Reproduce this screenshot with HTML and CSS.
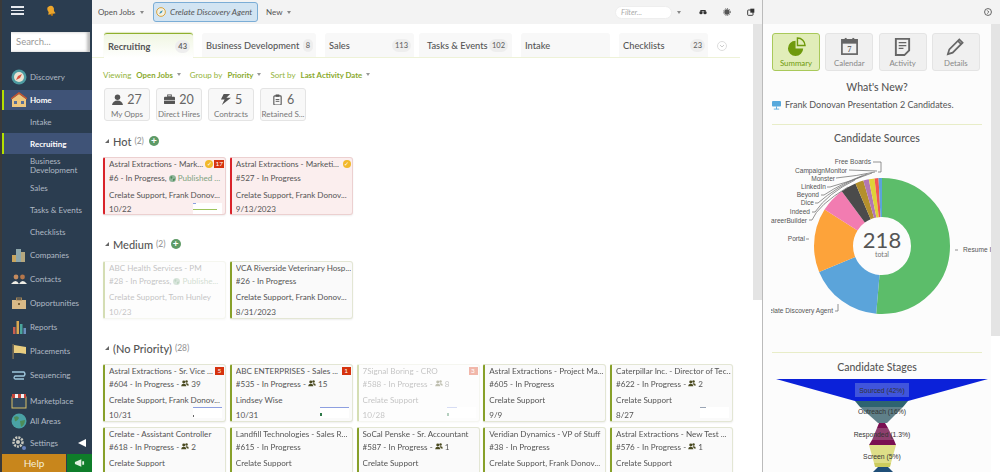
FILE: index.html
```html
<!DOCTYPE html>
<html lang="en">
<head>
<meta charset="utf-8">
<title>Recruiting</title>
<link rel="stylesheet" href="styles.css">
</head>
<body>
<svg class="defs" width="0" height="0">
  <symbol id="people" viewBox="0 0 10 9"><circle cx="3.400" cy="2.600" r="1.900" fill="#4a4a20"/><path d="M0 8 Q0.500 4.800 3.400 4.800 Q6.300 4.800 6.800 8Z" fill="#4a4a20"/><circle cx="7" cy="2" r="1.600" fill="#4a4a20"/><path d="M5.800 4.300 Q9.600 3.300 10 7 H7.600Z" fill="#4a4a20"/></symbol>
  <symbol id="globe" viewBox="0 0 8 8"><circle cx="4" cy="4" r="4" fill="#8fb59a"/><path d="M1.500 2 Q3.500 0.800 4 2.500 Q3 5 2 4Z M4.500 4.500 L7 4 Q7 6.500 5 7.500Z" fill="#4d8c58"/></symbol>
</svg>
<div class="app">
  <aside class="sidebar">
    <div class="side-top">
      <span class="burger"><i></i><i></i><i></i></span>
      <svg class="bell" viewBox="0 0 12 12"><path d="M2.500 3 Q5 0 8 1.200 Q10.500 3 9.800 6.500 L11.500 9 L3.500 10.500 L4 8 Q2 6 2.500 3Z" fill="#eda62b"/><circle cx="7.500" cy="10.500" r="1.300" fill="#b87412"/></svg>
    </div>
    <div class="search">Search...</div>
    <nav class="nav">
      <a class="nav-row"><svg class="ic" viewBox="0 0 16 16"><circle cx="8" cy="8" r="7.500" fill="#4d9aa0"/><circle cx="8" cy="8" r="5" fill="#e9e3d2"/><path d="M11 5 L9 9 L5 11 L7 7Z" fill="#d8503c"/></svg>Discovery</a>
      <a class="nav-row sel home"><svg class="ic" viewBox="0 0 16 16"><path d="M1 7 L8 2 L15 7 V15 H1Z" fill="#eec77f"/><path d="M0 7 L8 1 L16 7" fill="none" stroke="#c9572e" stroke-width="1.500"/><rect x="3" y="9" width="3" height="3" fill="#58709a"/><rect x="10" y="9" width="3" height="3" fill="#58709a"/></svg>Home</a>
      <a class="nav-row">Intake</a>
      <a class="nav-row sel rec">Recruiting</a>
      <a class="nav-row two">Business Development</a>
      <a class="nav-row">Sales</a>
      <a class="nav-row">Tasks &amp; Events</a>
      <a class="nav-row">Checklists</a>
      <a class="nav-row tall"><svg class="ic" viewBox="0 0 16 16"><rect x="1" y="8" width="4" height="7" fill="#c9a55e"/><rect x="5" y="2" width="5" height="13" fill="#8ea7ab"/><rect x="10" y="5" width="4" height="10" fill="#b5a77e"/></svg>Companies</a>
      <a class="nav-row tall"><svg class="ic" viewBox="0 0 16 16"><circle cx="5" cy="6" r="2.400" fill="#c48a5e"/><circle cx="11.500" cy="6" r="2.400" fill="#b5764b"/><path d="M0 13 Q5 7 8 13Z" fill="#f0eee6"/><path d="M8 13 Q11.500 7 16 13Z" fill="#f0eee6"/></svg>Contacts</a>
      <a class="nav-row tall"><svg class="ic" viewBox="0 0 16 16"><rect x="1" y="5" width="14" height="9" fill="#d8b987"/><rect x="5.500" y="3" width="5" height="2" fill="none" stroke="#a58557"/><rect x="7" y="8" width="2" height="2" fill="#7b6036"/></svg>Opportunities</a>
      <a class="nav-row tall"><svg class="ic" viewBox="0 0 16 16"><rect x="2" y="8" width="2.500" height="7" fill="#c95f50"/><rect x="5.500" y="2" width="2.500" height="13" fill="#d9a851"/><rect x="9" y="5" width="2.500" height="10" fill="#4aa59d"/><rect x="12.500" y="9" width="2.500" height="6" fill="#6b8fbe"/></svg>Reports</a>
      <a class="nav-row tall"><svg class="ic" viewBox="0 0 16 16"><rect x="1.500" y="1" width="1.200" height="15" fill="#8d7a55"/><path d="M3 2 L9 3 L15 4 V11 L9 10 L3 10Z" fill="#e8cd80"/></svg>Placements</a>
      <a class="nav-row seq"><svg class="ic" viewBox="0 0 16 16"><path d="M1 5 H13 Q15 7 13 9 H4 Q2 11 4 12 H13" fill="none" stroke="#9fc7dd" stroke-width="1.300"/></svg>Sequencing</a>
      <a class="nav-row market"><svg class="ic" viewBox="0 0 16 16"><rect x="1" y="4" width="14" height="11" fill="#33485e" stroke="#d9c067"/><path d="M1 1 H15 V5 H1Z" fill="#c8453a"/><path d="M4 1 H7 V5 H4Z M10 1 H13 V5 H10Z" fill="#f0f0f0"/></svg>Marketplace</a>
      <a class="nav-row"><svg class="ic" viewBox="0 0 16 16"><circle cx="8" cy="8" r="7.500" fill="#4aa2a5"/><path d="M3 4 Q7 2 8 5 Q6 9 4 8Z M9 8 L14 7 Q14 12 10 14Z" fill="#4d8c58"/></svg>All Areas</a>
      <a class="nav-row"><svg class="ic" viewBox="0 0 16 16"><circle cx="7" cy="7" r="4.500" fill="none" stroke="#c9c9c0" stroke-width="2.500" stroke-dasharray="2 1"/><circle cx="7" cy="7" r="2" fill="#c9c9c0"/><circle cx="13" cy="13" r="2" fill="#6a83bd"/></svg>Settings<span class="collapse"></span></a>
    </nav>
    <div class="side-foot">
      <span class="help">Help</span>
      <span class="promo"><svg viewBox="0 0 12 10"><path d="M1 4 L8 1 V9 L1 6Z M9 3 H11 V7 H9Z" fill="#dff0df"/></svg></span>
    </div>
  </aside>

  <main class="main">
    <header class="topbar">
      <span class="tool">Open Jobs<b class="caret"></b></span>
      <span class="agent"><svg class="agent-ic" viewBox="0 0 16 16"><circle cx="8" cy="8" r="7" fill="#f2f0e2" stroke="#d8a033" stroke-width="1.500"/><path d="M11 5 L9 9 L5 11 L7 7Z" fill="#3c93b5"/></svg>Crelate Discovery Agent</span>
      <span class="tool">New<b class="caret"></b></span>
      <span class="grow"></span>
      <span class="filter">Filter...</span>
      <b class="caret"></b>
      <svg class="top-ic glasses" viewBox="0 0 12 8"><circle cx="3" cy="5" r="2.500" fill="#333"/><circle cx="9" cy="5" r="2.500" fill="#333"/><rect x="2" y="1" width="8" height="2" fill="#333"/></svg>
      <svg class="top-ic gear" viewBox="0 0 12 12"><circle cx="6" cy="6" r="4" fill="#555"/><circle cx="6" cy="6" r="5.200" fill="none" stroke="#555" stroke-dasharray="1.500 1.500" stroke-width="1.400"/></svg>
      <svg class="top-ic pop" viewBox="0 0 12 12"><rect x="1" y="3" width="8" height="8" rx="1" fill="none" stroke="#333" stroke-width="1.400"/><rect x="5" y="1" width="6" height="6" fill="#333"/></svg>
    </header>
    <div class="scroller">
      <div class="content">
        <div class="tabs">
          <span class="tab active">Recruiting<em>43</em></span>
          <span class="tab wide">Business Development<em class="small">8</em></span>
          <span class="tab">Sales<em>113</em></span>
          <span class="tab tasks">Tasks &amp; Events<em>102</em></span>
          <span class="tab">Intake</span>
          <span class="tab">Checklists<em>23</em></span>
          <svg class="more" viewBox="0 0 10 10"><circle cx="5" cy="5" r="4.500" fill="none" stroke="#ddd"/><path d="M3 4 L5 6 L7 4" fill="none" stroke="#ccc"/></svg>
        </div>
        <div class="viewbar">
          <span>Viewing</span><b>Open Jobs</b><i class="caret"></i>
          <span class="gap">Group by</span><b>Priority</b><i class="caret"></i>
          <span class="gap">Sort by</span><b>Last Activity Date</b><i class="caret"></i>
        </div>
        <div class="stats">
          <div class="stat"><div class="num"><svg class="stat-ic" viewBox="0 0 12 12"><circle cx="6" cy="3.500" r="3" fill="#555"/><path d="M0 12 Q1 7 6 7 Q11 7 12 12Z" fill="#555"/></svg>27</div><div class="cap">My Opps</div></div>
          <div class="stat"><div class="num"><svg class="stat-ic" viewBox="0 0 12 12"><rect y="3" width="12" height="8" rx="1" fill="#555"/><rect x="4" y="1" width="4" height="2" fill="none" stroke="#555"/><rect y="6.500" width="12" height=".7" fill="#f8f8f8"/></svg>20</div><div class="cap">Direct Hires</div></div>
          <div class="stat"><div class="num"><svg class="stat-ic" viewBox="0 0 12 12"><path d="M4 0 H11 L7 4 H12 L2 12 L5 6 H1Z" fill="#555"/></svg>5</div><div class="cap">Contracts</div></div>
          <div class="stat"><div class="num"><svg class="stat-ic" viewBox="0 0 12 12"><rect x="2" y="2" width="8" height="10" rx="1" fill="none" stroke="#555" stroke-width="1.200"/><rect x="4" y="0.500" width="4" height="2.500" fill="#555"/><path d="M4 6 H8 M4 8 H8" stroke="#555"/></svg>6</div><div class="cap">Retained S...</div></div>
        </div>

        <h3 class="group top"><i class="tri"></i>Hot<small>(2)</small><span class="plus">+</span></h3>
        <div class="cards">
          <article class="card hot">
            <p class="title"><span class="clip">Astral Extractions - Mark...</span><span class="check">✓</span><span class="badge">17</span></p>
            <p>#6 - In Progress, <svg class="globe"><use href="#globe"/></svg><span class="pub"> Published ...</span></p>
            <p>Crelate Support, Frank Donov...</p>
            <p>10/22</p>
            <span class="mini"><i class="b1"></i><i class="b2"></i></span>
          </article>
          <article class="card hot">
            <p class="title"><span class="clip">Astral Extractions - Marketi...</span><span class="check">✓</span></p>
            <p>#527 - In Progress</p>
            <p>Crelate Support, Frank Donov...</p>
            <p>9/13/2023</p>
          </article>
        </div>

        <h3 class="group"><i class="tri"></i>Medium<small>(2)</small><span class="plus">+</span></h3>
        <div class="cards">
          <article class="card faded">
            <p class="title"><span class="clip">ABC Health Services - PM</span></p>
            <p>#28 - In Progress, <svg class="globe"><use href="#globe"/></svg><span class="pub"> Publishe...</span></p>
            <p>Crelate Support, Tom Hunley</p>
            <p>10/23</p>
          </article>
          <article class="card">
            <p class="title"><span class="clip">VCA Riverside Veterinary Hosp...</span></p>
            <p>#26 - In Progress</p>
            <p>Crelate Support, Frank Donov...</p>
            <p>8/31/2023</p>
          </article>
        </div>

        <h3 class="group last"><i class="tri"></i>(No Priority)<small>(28)</small></h3>
        <div class="cards">
          <article class="card">
            <p class="title"><span class="clip">Astral Extractions - Sr. Vice ...</span><span class="badge">5</span></p>
            <p>#604 - In Progress - <svg class="ppl"><use href="#people"/></svg> 39</p>
            <p>Crelate Support, Frank Donov...</p>
            <p>10/31</p>
            <span class="mini"><i class="b3"></i><i class="b5"></i></span>
          </article>
          <article class="card">
            <p class="title"><span class="clip">ABC ENTERPRISES - Sales ...</span><span class="badge">1</span></p>
            <p>#535 - In Progress - <svg class="ppl"><use href="#people"/></svg> 15</p>
            <p>Lindsey Wise</p>
            <p>10/31</p>
            <span class="mini"><i class="b3"></i><i class="b6"></i></span>
          </article>
          <article class="card faded">
            <p class="title"><span class="clip">7Signal Boring - CRO</span><span class="badge">3</span></p>
            <p>#588 - In Progress - <svg class="ppl"><use href="#people"/></svg> 8</p>
            <p>Crelate Support</p>
            <p>10/28</p>
            <span class="mini"><i class="b7"></i><i class="b6"></i></span>
          </article>
          <article class="card">
            <p class="title"><span class="clip">Astral Extractions - Project Ma...</span></p>
            <p>#605 - In Progress</p>
            <p>Crelate Support</p>
            <p>9/9</p>
          </article>
          <article class="card">
            <p class="title"><span class="clip">Caterpillar Inc. - Director of Tec...</span></p>
            <p>#622 - In Progress - <svg class="ppl"><use href="#people"/></svg> 2</p>
            <p>Crelate Support</p>
            <p>8/27</p>
            <span class="mini"><i class="b4"></i></span>
          </article>
          <article class="card">
            <p class="title"><span class="clip">Crelate - Assistant Controller</span></p>
            <p>#618 - In Progress - <svg class="ppl"><use href="#people"/></svg> 2</p>
            <p>Crelate Support</p>
          </article>
          <article class="card">
            <p class="title"><span class="clip">Landfill Technologies - Sales R...</span></p>
            <p>#615 - In Progress</p>
            <p>Crelate Support</p>
          </article>
          <article class="card">
            <p class="title"><span class="clip">SoCal Penske - Sr. Accountant</span></p>
            <p>#587 - In Progress - <svg class="ppl"><use href="#people"/></svg> 1</p>
            <p>Crelate Support</p>
          </article>
          <article class="card">
            <p class="title"><span class="clip">Veridian Dynamics - VP of Stuff</span></p>
            <p>#38 - In Progress</p>
            <p>Crelate Support, Frank Donov...</p>
          </article>
          <article class="card">
            <p class="title"><span class="clip">Astral Extractions - New Test ...</span></p>
            <p>#576 - In Progress - <svg class="ppl"><use href="#people"/></svg> 1</p>
            <p>Crelate Support</p>
          </article>
        </div>
      </div>
      <div class="scrolltrack"></div>
    </div>
  </main>

  <aside class="panel">
    <header class="panel-top"><svg class="round-btn" viewBox="0 0 10 10"><circle cx="5" cy="5" r="4.300" fill="none" stroke="#444"/><path d="M4 3 L6 5 L4 7" fill="none" stroke="#444"/></svg></header>
    <div class="panel-scroll">
      <div class="panel-body">
        <div class="views">
          <div class="view on"><svg class="view-ic" viewBox="0 0 20 20"><path d="M9 4 A8 8 0 1 0 17 12 H9Z" fill="#6f9a0c"/><path d="M11 1 A8 8 0 0 1 19 9 L11 9Z" fill="none" stroke="#6f9a0c" stroke-width="1.500"/></svg><span>Summary</span></div>
          <div class="view"><svg class="view-ic" viewBox="0 0 20 20"><rect x="2" y="3" width="16" height="15" fill="none" stroke="#666" stroke-width="1.800"/><rect x="2" y="3" width="16" height="4" fill="#666"/><rect x="5" y="1" width="2" height="4" fill="#666"/><rect x="13" y="1" width="2" height="4" fill="#666"/><text x="10" y="16" class="cal-num">7</text></svg><span>Calendar</span></div>
          <div class="view"><svg class="view-ic" viewBox="0 0 20 20"><path d="M3 2 H17 V14 L12 19 H3Z" fill="none" stroke="#666" stroke-width="2"/><path d="M6 6 H14 M6 9 H14 M6 12 H11" stroke="#666" stroke-width="1.400"/></svg><span>Activity</span></div>
          <div class="view"><svg class="view-ic" viewBox="0 0 20 20"><path d="M2 18 L3.500 13 L14 2.500 L17.500 6 L7 16.500Z" fill="none" stroke="#666" stroke-width="1.800"/><path d="M12.500 4 L16 7.500" stroke="#666" stroke-width="1.800"/></svg><span>Details</span></div>
        </div>
        <h4 class="panel-h news">What's New?</h4>
        <p class="news-item"><svg class="news-ic" viewBox="0 0 10 10"><rect width="10" height="6" rx="1" fill="#58a9dc"/><path d="M5 6 V9 M2 9 H8" stroke="#58a9dc"/></svg>Frank Donovan Presentation 2 Candidates.</p>
        <hr class="rule">
        <h4 class="panel-h">Candidate Sources</h4>
        <svg class="pie" viewBox="1 0 228 207">
          <clipPath id="pie-clip"><rect x="9" y="0" width="220" height="207"/></clipPath>
          <g fill="none" stroke-width="39" transform="rotate(-90 120 101)">
            <circle cx="120" cy="101" r="48.500" pathLength="360" stroke="#5cbd6a" stroke-dasharray="185 360"/>
            <circle cx="120" cy="101" r="48.500" pathLength="360" stroke="#5ba4da" stroke-dasharray="62.600 360" stroke-dashoffset="-185"/>
            <circle cx="120" cy="101" r="48.500" pathLength="360" stroke="#fda33a" stroke-dasharray="54.800 360" stroke-dashoffset="-247.600"/>
            <circle cx="120" cy="101" r="48.500" pathLength="360" stroke="#f27cb1" stroke-dasharray="21.300 360" stroke-dashoffset="-302.400"/>
            <circle cx="120" cy="101" r="48.500" pathLength="360" stroke="#4b4b4b" stroke-dasharray="13.300 360" stroke-dashoffset="-323.700"/>
            <circle cx="120" cy="101" r="48.500" pathLength="360" stroke="#b4902c" stroke-dasharray="7 360" stroke-dashoffset="-337"/>
            <circle cx="120" cy="101" r="48.500" pathLength="360" stroke="#b277b4" stroke-dasharray="4.800 360" stroke-dashoffset="-344"/>
            <circle cx="120" cy="101" r="48.500" pathLength="360" stroke="#ded237" stroke-dasharray="4.800 360" stroke-dashoffset="-348.800"/>
            <circle cx="120" cy="101" r="48.500" pathLength="360" stroke="#f15853" stroke-dasharray="3.400 360" stroke-dashoffset="-353.600"/>
            <circle cx="120" cy="101" r="48.500" pathLength="360" stroke="#5ba4da" stroke-dasharray="3 360" stroke-dashoffset="-357"/>
          </g>
          <g fill="none" stroke="#777" stroke-width="0.800">
            <path d="M111 17 H119 V27 H116"/>
            <path d="M87 25 L115 26"/>
            <path d="M74 33 Q95 31 113 27"/>
            <path d="M65 42 H68 Q90 36 110 28"/>
            <path d="M59 50 H62 Q80 38 105 29"/>
            <path d="M53 58 H56 Q74 42 100 31"/>
            <path d="M50 67 H53 Q66 48 93 35"/>
            <path d="M47 75 H50 Q56 60 86 42"/>
            <path d="M44 94 H47"/>
            <path d="M193 105 H196"/>
            <path d="M73 166 H76 V159"/>
          </g>
          <g class="pie-label" text-anchor="end" clip-path="url(#pie-clip)">
            <text x="109" y="19">Free Boards</text>
            <text x="85" y="27.500">CampaignMonitor</text>
            <text x="73" y="36">Monster</text>
            <text x="64" y="44">LinkedIn</text>
            <text x="57" y="52">Beyond</text>
            <text x="52" y="60">Dice</text>
            <text x="48" y="69">Indeed</text>
            <text x="45" y="77.500">CareerBuilder</text>
            <text x="43" y="96">Portal</text>
            <text x="71" y="168">Crelate Discovery Agent</text>
          </g>
          <text class="pie-label" x="201" y="107">Resume Import</text>
          <text class="pie-num" x="120" y="103" text-anchor="middle">218</text>
          <text class="pie-total" x="120" y="111.500" text-anchor="middle">total</text>
        </svg>
        <hr class="rule second">
        <h4 class="panel-h">Candidate Stages</h4>
        <svg class="funnel" viewBox="1 0 228 94">
          <path d="M14 1 H226 L146 23 H93Z" fill="#0b21d9"/>
          <rect x="93" y="5" width="54" height="14" fill="#4055dc"/>
          <path d="M93 23 H146 L141 29 H98Z" fill="#2e6470"/>
          <path d="M98 29 H141 L125 45 H116Z" fill="#5f8089"/>
          <path d="M117 45 H123 L126 50 H115Z" fill="#7a0f52"/>
          <path d="M115 50 H126 L132 62 H110Z" fill="#8e3f6e"/>
          <path d="M110 62 H132 L134 67 H107Z" fill="#7a0f52"/>
          <path d="M107 67 H134 L129 85 H112Z" fill="#dede88"/>
          <path d="M112 85 H129 L128 89 H113Z" fill="#cccc5e"/>
          <path d="M116 89 H126 L131 94 H111Z" fill="#1f4f78"/>
          <g class="fn-label" text-anchor="middle">
            <text x="120" y="14.500">Sourced  (42%)</text>
            <text x="120" y="36">Outreach  (16%)</text>
            <text x="120" y="58.500">Responded  (1.3%)</text>
            <text x="120" y="81">Screen  (5%)</text>
          </g>
        </svg>
      </div>
      <div class="panel-track"></div>
    </div>
  </aside>
</div>
</body>
</html>
```

FILE: styles.css
```css
* { box-sizing: border-box; }
html, body { margin: 0; height: 100%; overflow: hidden; }
body { font-family: "Lato", "Open Sans", sans-serif; font-size: 9px; color: #555; background: #fff; }
p, h3, h4 { margin: 0; font-weight: normal; }
.defs { position: absolute; }

.app { display: flex; width: 1000px; height: 472px; overflow: hidden; }

/* Sidebar */
.sidebar { width: 92px; flex: none; height: 472px; background: #2b3d50; border-left: 2px solid #3a3a3a; display: flex; flex-direction: column; color: #b0b9c4; }
.side-top { height: 32px; flex: none; display: flex; align-items: flex-start; padding: 5px 0 0 9px; gap: 21px; }
.burger { display: flex; flex-direction: column; gap: 2px; width: 13px; padding-top: 1px; }
.burger i { display: block; height: 1.500px; background: #e6e9ee; }
.bell { width: 11px; height: 11px; }
.search { flex: none; margin-left: 9px; width: 79px; height: 20px; background: #fff; color: #999; font-size: 9.500px; line-height: 20px; padding-left: 5px; box-shadow: inset -3px 0 3px #bbb; }
.nav { margin-top: 14px; flex: 1; min-height: 0; display: flex; flex-direction: column; }
.nav-row { height: 22px; flex: none; display: flex; align-items: center; padding-left: 28px; position: relative; font-size: 8px; }
.ic { position: absolute; left: 9px; top: 50%; width: 16px; height: 16px; margin-top: -8px; }
.nav-row.tall { height: 24px; }
.nav-row.seq { height: 23px; }
.nav-row.market { height: 24px; margin-top: 3px; margin-bottom: -3px; }
.nav-row.two { height: 23px; line-height: 8.500px; padding-right: 8px; }
.nav-row.sel { background: #3f5377; color: #fff; font-weight: 700; border-left: 2px solid #b4e000; padding-left: 26px; }
.nav-row.sel .ic { left: 7px; }
.nav-row.home { height: 20px; margin-top: 2px; margin-bottom: 1px; }
.nav-row.rec { height: 21px; }
.collapse { position: absolute; right: 6px; top: 7px; width: 0; height: 0; border-right: 8px solid #fff; border-top: 4px solid transparent; border-bottom: 4px solid transparent; }
.side-foot { height: 18px; flex: none; display: flex; gap: 1px; }
.help { width: 64px; background: #c8861c; color: #f5efd8; font-size: 10px; text-align: center; line-height: 19px; }
.promo { flex: 1; background: #0f7d2a; display: flex; align-items: center; justify-content: center; }
.promo svg { width: 11px; height: 10px; }

/* Main */
.main { width: 671px; flex: none; height: 472px; display: flex; flex-direction: column; background: #fff; border-right: 1px solid #bbb; }
.topbar { height: 24px; flex: none; background: #f3f3f3; display: flex; align-items: center; padding-left: 6px; font-size: 8px; color: #555; }
.tool { display: inline-flex; align-items: center; }
.agent { display: inline-flex; align-items: center; height: 20px; margin: 0 8px 0 9px; width: 105px; background: #d2e4f2; border: 1px solid #7badd6; border-radius: 3px; font-style: italic; padding-left: 2px; gap: 4px; font-size: 8.300px; white-space: nowrap; overflow: hidden; }
.agent-ic { width: 10px; height: 10px; flex: none; }
.caret { display: inline-block; width: 0; height: 0; border-top: 3px solid #888; border-left: 2.500px solid transparent; border-right: 2.500px solid transparent; margin-left: 5px; }
.grow { flex: 1; }
.filter { width: 57px; height: 13px; background: #fff; border: 1px solid #eee; border-radius: 7px; font-style: italic; color: #aaa; font-size: 7.500px; line-height: 11px; padding-left: 5px; }
.top-ic { flex: none; }
.glasses { width: 8px; height: 6px; margin-left: 18px; }
.gear { width: 8px; height: 8px; margin-left: 16px; }
.pop { width: 8px; height: 8px; margin-left: 16px; margin-right: 7px; }
.scroller { flex: 1; min-height: 0; display: flex; }
.content { flex: 1; min-width: 0; padding: 9px 0 0 11px; overflow: hidden; }
.scrolltrack { width: 9px; height: 276px; background: #e4e4e4; flex: none; }

.tabs { display: flex; gap: 9px; height: 25px; margin: 0 13px 0 -11px; padding-left: 12px; border-bottom: 1px solid #eef2d8; }
.tab { width: 89px; height: 24px; background: #f8f8f8; border-radius: 3px 3px 0 0; display: flex; align-items: center; justify-content: space-between; padding: 0 3px 0 4px; font-size: 9.300px; font-weight: 500; color: #555; white-space: nowrap; }
.tab.wide { width: 114px; }
.tab.tasks { width: 93px; margin-left: -4px; padding: 0 4px 0 8px; }
.tab em { font-style: normal; background: #eee; border-radius: 7px; padding: 0 3px; line-height: 13px; font-size: 7.500px; min-width: 14px; text-align: center; color: #666; }
.tab em.small { min-width: 10px; }
.tab.active { background: linear-gradient(#f0f6e2, #fff); border-top: 1px solid #8fb02c; height: 25px; font-weight: 700; box-shadow: 0 -1px 1px #dfe8c2; }
.more { width: 10px; height: 10px; margin-top: 8px; }

.viewbar { display: flex; align-items: center; height: 13px; margin-top: 10px; color: #93b33a; font-size: 8px; }
.viewbar b { font-weight: 700; margin-left: 5px; color: #8aa92c; font-size: 7.800px; }
.viewbar .caret { border-top-color: #999; margin-left: 4px; }
.viewbar .gap { margin-left: 9px; }

.stats { display: flex; gap: 6px; margin-top: 7px; padding-left: 1px; }
.stat { width: 46px; height: 33px; background: #f8f8f8; border: 1px solid #e4e4e4; border-radius: 3px; text-align: center; color: #777; white-space: nowrap; overflow: hidden; }
.num { font-size: 12.500px; line-height: 18px; height: 19px; margin-top: 1px; display: flex; align-items: center; justify-content: center; gap: 4px; color: #666; }
.stat-ic { width: 11px; height: 11px; }
.cap { font-size: 8px; line-height: 10px; }

.group { display: flex; align-items: center; font-size: 11px; color: #555; height: 14px; margin: 22px 0 10px; padding-left: 10px; position: relative; font-weight: 500; }
.group.top { margin: 13px 0 9px; }
.group.last { margin: 22px 0 9px; }
.group small { font-size: 8.500px; color: #999; margin-left: 3px; }
.tri { position: absolute; left: 2px; top: 5px; width: 0; height: 0; border-bottom: 4px solid #666; border-left: 4px solid transparent; }
.plus { width: 10px; height: 10px; margin-left: 5px; border-radius: 50%; background: #5e9a66; color: #fff; font-size: 10px; font-weight: 700; line-height: 9px; text-align: center; }

.cards { display: grid; grid-template-columns: repeat(5, 123px); gap: 5px 3.750px; }
.card { position: relative; height: 58px; background: #fafafa; border: 1px solid #e3e6d4; border-left: 2px solid #87a02a; border-radius: 2px 3px 3px 2px; padding: 0 1px 0 4px; display: grid; grid-template-rows: 11px 16px 15px 15px; box-shadow: 0 1px 2px #eee; color: #555; font-size: 8.100px; white-space: nowrap; overflow: hidden; align-items: center; }
.card p { overflow: hidden; }
.card .title { display: flex; align-items: center; gap: 1px; }
.clip { flex: 1; min-width: 0; overflow: hidden; }
.card.hot { background: #fbeeee; border-color: #ecd0d0; border-left-color: #d9232a; grid-template-rows: 11px 18px 15px 13px; }
.card.faded { opacity: .35; }
.check { flex: none; width: 8px; height: 8px; border-radius: 50%; background: #f2b92b; color: #fff; font-size: 6px; line-height: 8px; text-align: center; }
.badge { flex: none; min-width: 9px; height: 8px; padding: 0 1px; background: #d6330e; color: #fff; font-size: 6.500px; line-height: 8px; text-align: center; }
.pub { color: #7fa27f; }
.globe { width: 7px; height: 7px; vertical-align: -1px; }
.ppl { width: 8px; height: 7px; vertical-align: 0; }
.mini { position: absolute; right: 3px; bottom: 3px; width: 29px; height: 11px; background: #fff; }
.mini i { position: absolute; left: 0; top: 0; height: 1px; display: block; background: #8d9fe0; }
.hot .mini { bottom: 0; }
.mini .b1 { width: 3px; }
.mini .b2 { top: 6px; width: 24px; background: #9ec45c; }
.mini .b3 { width: 29px; }
.mini .b4 { width: 6px; background: #9aa5b5; }
.mini .b5 { top: 8px; width: 1px; height: 2px; background: #666; }
.mini .b6 { top: 6px; width: 2px; height: 3px; background: #2f7a4a; }
.mini .b7 { width: 10px; }

/* Right panel */
.panel { flex: 1; min-width: 0; height: 472px; display: flex; flex-direction: column; background: #fff; }
.panel-top { height: 24px; flex: none; background: #f3f3f3; display: flex; justify-content: flex-end; align-items: center; padding-right: 8px; }
.round-btn { width: 8px; height: 8px; }
.panel-scroll { flex: 1; min-height: 0; display: flex; }
.panel-body { width: 228px; flex: none; background: #fcfcfc; padding: 0 9px; height: 448px; overflow: hidden; }
.panel-track { width: 9px; height: 312px; background: #e4e4e4; }
.views { display: flex; gap: 5.300px; padding-top: 9px; }
.view { width: 48px; height: 38px; background: #f0f0f0; border: 1px solid #e4e4e4; border-radius: 3px; display: flex; flex-direction: column; align-items: center; color: #888; font-size: 7.800px; line-height: 10px; }
.view.on { background: #e1edb9; border-color: #a9c95a; color: #6f9a0c; }
.view-ic { width: 19px; height: 19px; margin: 3px 0 2px; }
.cal-num { font: 700 9px "Liberation Serif", serif; fill: #666; text-anchor: middle; }
.panel-h { text-align: center; font-size: 10.500px; color: #555; line-height: 14px; font-weight: 500; }
.panel-h.news { margin-top: 9px; }
.news-item { display: flex; align-items: center; gap: 4px; margin-top: 5px; font-size: 9px; line-height: 12px; white-space: nowrap; }
.news-ic { width: 9px; height: 9px; flex: none; }
.rule { border: 0; border-top: 1px solid #e8edc8; margin: 13px 0 6px; }
.rule.second { margin: 0 0 7px; }
.pie { display: block; width: 228px; height: 207px; margin: 0 -9px; }
.pie-label { font: 6.600px "Liberation Sans", sans-serif; fill: #555; }
.pie-num { font: 22px "Lato", sans-serif; fill: #555; }
.pie-total { font: 7px "Lato", sans-serif; fill: #777; }
.funnel { display: block; width: 228px; height: 94px; margin: 4px -9px 0; }
.fn-label { font: 6.800px "Liberation Sans", sans-serif; fill: #333; }
```
